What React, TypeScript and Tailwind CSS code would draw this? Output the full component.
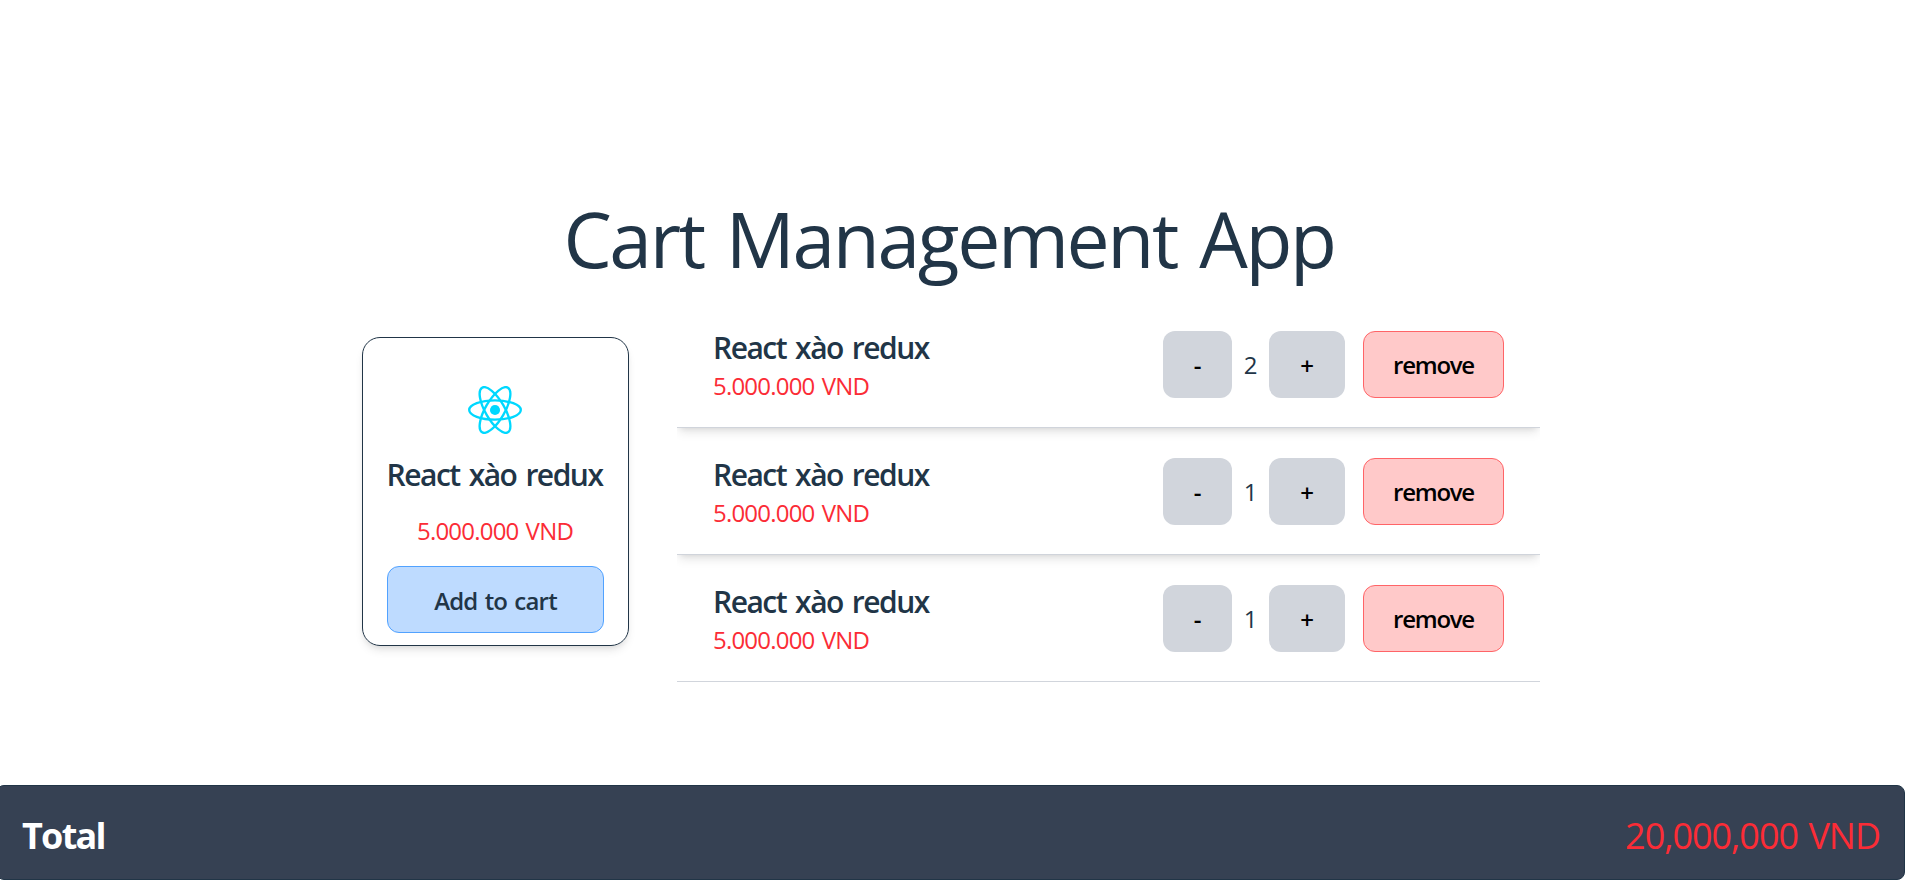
type Item = { id: number; name: string; price: string; quantity: number };

const items: Item[] = [
  { id: 1, name: "React xào redux", price: "5.000.000 VND", quantity: 2 },
  { id: 2, name: "React xào redux", price: "5.000.000 VND", quantity: 1 },
  { id: 3, name: "React xào redux", price: "5.000.000 VND", quantity: 1 },
];

function ReactLogo() {
  return (
    <svg viewBox="-11.5 -10.232 23 20.463" className="mr-px h-12 w-[54px]" fill="none" stroke="#00d8ff" strokeWidth="1">
      <circle r="2.15" fill="#00d8ff" stroke="none" />
      <ellipse rx="11" ry="4.1" />
      <ellipse rx="11" ry="4.1" transform="rotate(60)" />
      <ellipse rx="11" ry="4.1" transform="rotate(120)" />
    </svg>
  );
}

function ProductCard() {
  return (
    <section className="mt-9 flex h-[309px] w-[267px] flex-col items-center rounded-[18px] border border-[#213547] px-6 pt-12 shadow-[0_6px_10px_-2px_rgb(0_0_0/0.1),0_3px_6px_-3px_rgb(0_0_0/0.1)]">
      <ReactLogo />
      <h2 className="mt-[21px] -ml-0.5 text-[30px] leading-[40px] font-semibold tracking-[-0.05em] whitespace-nowrap [word-spacing:0.09em]">
        React xào redux
      </h2>
      <p className="mt-[18px] -ml-px text-2xl leading-9 tracking-[-0.033em] text-[#fb2c36] [word-spacing:0.07em]">5.000.000 VND</p>
      <button className="mt-[17px] h-[67px] w-[217px] rounded-xl border border-[#51a2ff] bg-[#bedbff] pt-[3px] text-2xl font-semibold tracking-[-0.033em] [word-spacing:0.07em]">
        Add to cart
      </button>
    </section>
  );
}

function CartRow({ item }: { item: Item }) {
  return (
    <li className="flex h-[127px] items-start justify-between border-b border-[#d1d5dc] px-9 pt-[30px] shadow-[0_6px_10px_-2px_rgb(0_0_0/0.1),0_3px_6px_-3px_rgb(0_0_0/0.1)]">
      <div className="-mt-[3px]">
        <h3 className="text-[30px] leading-[40px] font-semibold tracking-[-0.05em] [word-spacing:0.09em]">{item.name}</h3>
        <p className="text-2xl leading-9 tracking-[-0.033em] text-[#fb2c36] [word-spacing:0.07em]">{item.price}</p>
      </div>
      <div className="flex items-center text-2xl">
        <button className="h-[67px] w-[69px] rounded-xl bg-[#d1d5dc] font-semibold text-black">-</button>
        <span className="w-[37px] text-center">{item.quantity}</span>
        <button className="h-[67px] w-[76px] rounded-xl bg-[#d1d5dc] pt-0.5 font-semibold text-black">+</button>
        <button className="ml-[18px] h-[67px] w-[141px] rounded-xl border border-[#ff6467] bg-[#ffc9c9] pt-px font-semibold tracking-[-0.052em] text-black">
          remove
        </button>
      </div>
    </li>
  );
}

export default function App() {
  return (
    <div className="flex h-[880px] flex-col overflow-hidden bg-white font-['Open_Sans','Noto_Sans',sans-serif] text-[#213547]">
      <main className="flex flex-1 flex-col pt-[193px]">
        <h1 className="-ml-[7px] text-center text-[76.8px] leading-[92px] tracking-[-0.031em] [word-spacing:0.06em]">
          Cart Management App
        </h1>
        <div className="mt-4 flex pl-[362px]">
          <ProductCard />
          <ul className="ml-12 w-[863px] self-start overflow-hidden">
            {items.map((item) => (
              <CartRow key={item.id} item={item} />
            ))}
          </ul>
        </div>
      </main>
      <footer className="-ml-1 flex h-[95px] items-center justify-between rounded-lg border border-[#213547] bg-[#364153] pt-1.5 pr-6 pl-[25px] text-4xl">
        <span className="font-bold tracking-[-0.048em] text-white">Total</span>
        <span className="tracking-[-0.029em] text-[#fb2c36] [word-spacing:0.06em]">20,000,000 VND</span>
      </footer>
    </div>
  );
}
